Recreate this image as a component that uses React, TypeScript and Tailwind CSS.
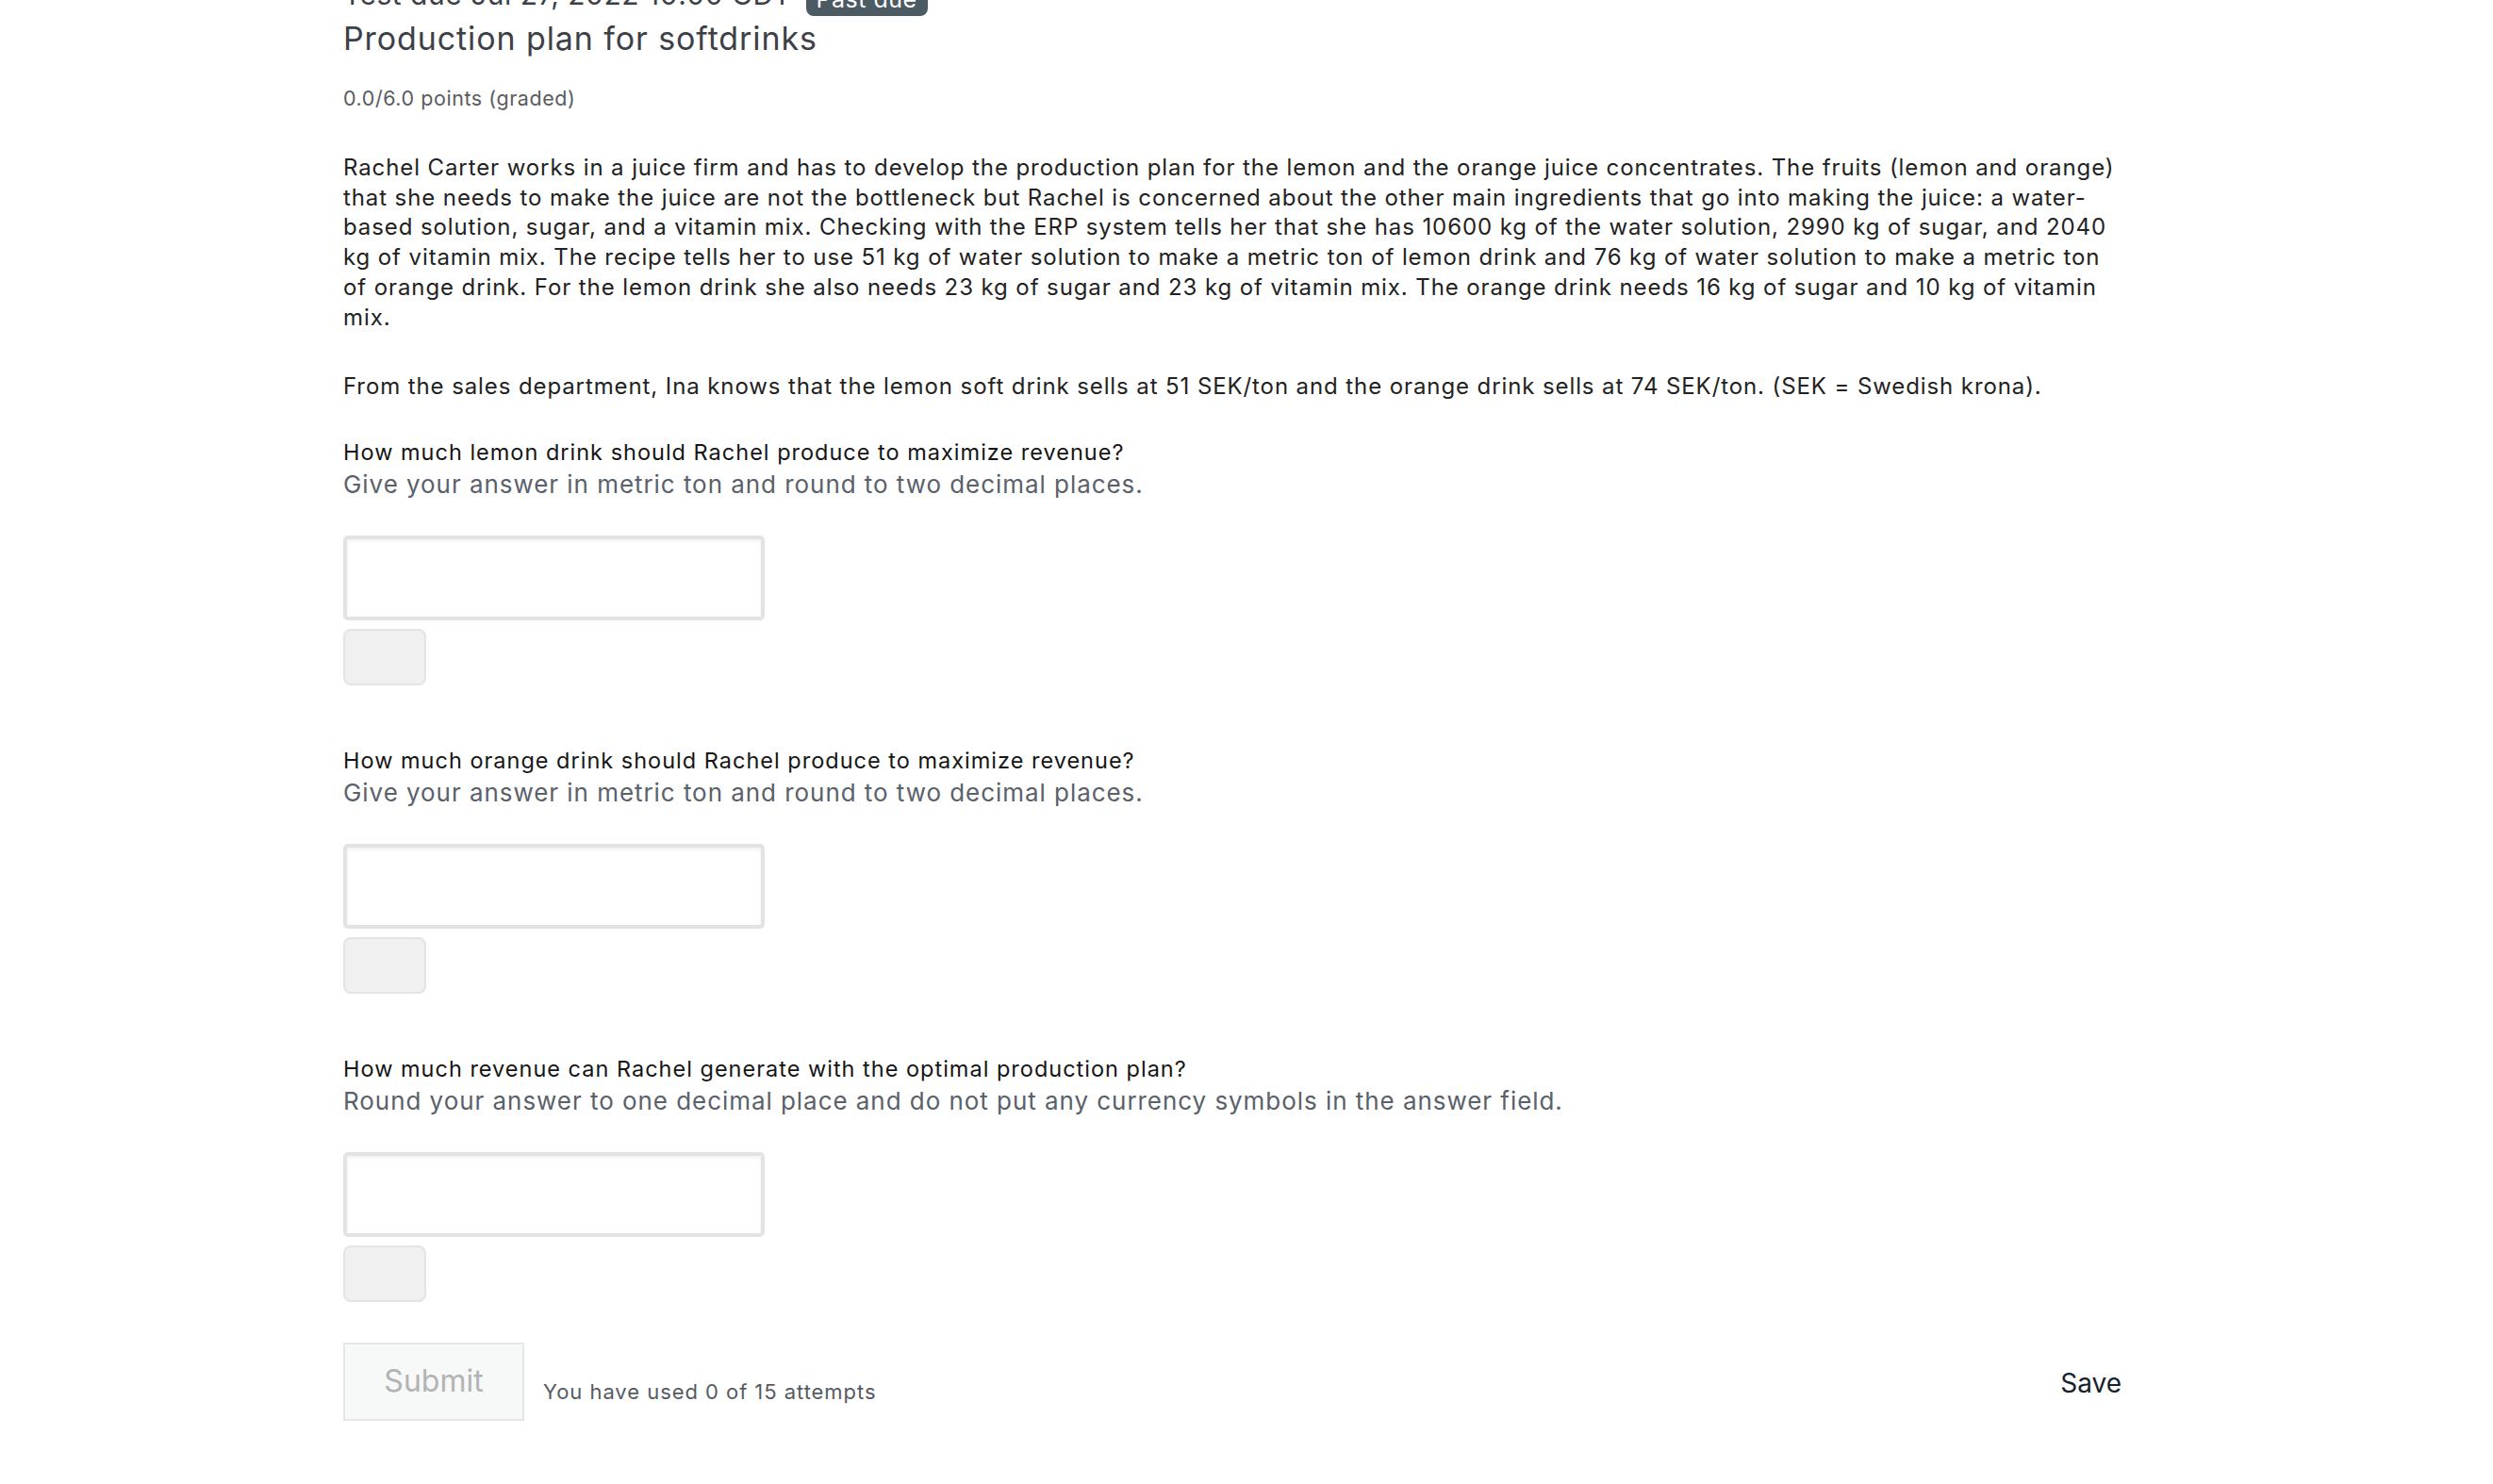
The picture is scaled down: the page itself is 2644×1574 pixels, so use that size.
import React from "react";

const questions = [
  {
    q: "How much lemon drink should Rachel produce to maximize revenue?",
    hint: "Give your answer in metric ton and round to two decimal places.",
  },
  {
    q: "How much orange drink should Rachel produce to maximize revenue?",
    hint: "Give your answer in metric ton and round to two decimal places.",
  },
  {
    q: "How much revenue can Rachel generate with the optimal production plan?",
    hint: "Round your answer to one decimal place and do not put any currency symbols in the answer field.",
  },
];

function Question({ q, hint, first }: { q: string; hint: string; first?: boolean }) {
  return (
    <div className={first ? "mt-[39px]" : "mt-[65px]"}>
      <div className="text-[23.5px] leading-[30px] tracking-[1px] text-[#151515]">{q}</div>
      <div className="mt-[2px] text-[26px] leading-[33px] tracking-[0.95px] text-[#5a616a]">{hint}</div>
      <div className="mt-[38px] h-[90px] w-[447px] rounded-[5px] border-[4px] border-[#e3e3e3] bg-white shadow-[inset_0_2px_4px_rgba(0,0,0,0.06)]" />
      <div className="mt-[9px] h-[60px] w-[88px] rounded-[8px] border-2 border-[#e4e4e4] bg-[#f0f0f0]" />
    </div>
  );
}

export default function App() {
  return (
    <div className="min-h-screen overflow-hidden bg-white font-[family-name:Inter,'Liberation_Sans',sans-serif]">
      <div className="ml-[364px] mt-[-26px] w-[1890px] pb-[60px]">
        {/* header, page is scrolled so the first line is cut */}
        <div className="flex items-start gap-[15px]">
          <span className="text-[30px] leading-[40px] tracking-[0.5px] text-[#3d4147]">Test due Jul 27, 2022 10:00 CDT</span>
          <span className="mt-[-1px] flex h-[44px] w-[129px] items-center justify-center rounded-[8px] bg-[#4c5a64] pt-[10px] text-[25px] tracking-[0.5px] text-white">
            Past due
          </span>
        </div>
        <h2 className="mt-[4px] text-[34px] leading-[40px] tracking-[0.9px] text-[#3d4147]">Production plan for softdrinks</h2>
        <div className="mt-[28px] text-[21.5px] leading-[30px] tracking-[0.55px] text-[#585c61]">0.0/6.0 points (graded)</div>

        <p className="mt-[43px] text-[24px] leading-[31.7px] tracking-[0.9px] text-[#222]">
          Rachel Carter works in a juice firm and has to develop the production plan for the lemon and the orange juice
          concentrates. The fruits (lemon and orange) that she needs to make the juice are not the bottleneck but Rachel
          is concerned about the other main ingredients that go into making the juice: a water-based solution, sugar, and
          a vitamin mix. Checking with the ERP system tells her that she has 10600 kg of the water solution, 2990 kg of
          sugar, and 2040 kg of vitamin mix. The recipe tells her to use 51 kg of water solution to make a metric ton of
          lemon drink and 76 kg of water solution to make a metric ton of orange drink. For the lemon drink she also needs
          23 kg of sugar and 23 kg of vitamin mix. The orange drink needs 16 kg of sugar and 10 kg of vitamin mix.
        </p>
        <p className="mt-[42px] text-[24px] leading-[31.7px] tracking-[0.9px] text-[#222]">
          From the sales department, Ina knows that the lemon soft drink sells at 51 SEK/ton and the orange drink sells at
          74 SEK/ton. (SEK = Swedish krona).
        </p>

        {questions.map((item, i) => (
          <Question key={i} q={item.q} hint={item.hint} first={i === 0} />
        ))}

        <div className="mt-[43px] flex w-[1886px] items-center">
          <button className="h-[83px] w-[192px] border-2 border-[#e6e6e6] bg-[#f7f8f8] text-[32px] text-[#b3b3b3]">
            Submit
          </button>
          <span className="ml-[20px] pt-[22px] text-[22px] tracking-[0.95px] text-[#555b63]">You have used 0 of 15 attempts</span>
          <button className="ml-auto pt-[4px] text-[28px] text-[#13232f]">Save</button>
        </div>
      </div>
    </div>
  );
}
